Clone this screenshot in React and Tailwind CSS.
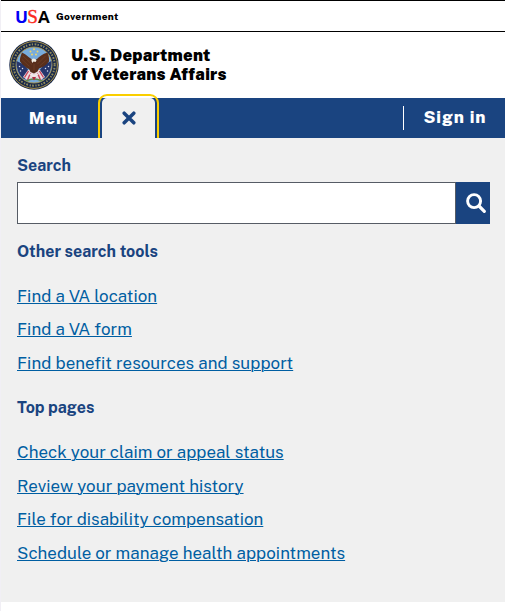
const toolLinks = [
  'Find a VA location',
  'Find a VA form',
  'Find benefit resources and support',
];

const pageLinks = [
  'Check your claim or appeal status',
  'Review your payment history',
  'File for disability compensation',
  'Schedule or manage health appointments',
];

function Seal() {
  return (
    <svg viewBox="0 0 100 100" className="size-[50px] shrink-0" aria-label="Department seal">
      <circle cx="50" cy="50" r="49.5" fill="#17284a" />
      <circle cx="50" cy="50" r="46.8" fill="none" stroke="#ad9449" strokeWidth="2" />
      <circle cx="50" cy="50" r="41.3" fill="none" stroke="#8f8a5c" strokeWidth="4" strokeDasharray="2.6 3.2 3.6 2.4" />
      <circle cx="50" cy="50" r="36" fill="#78acdc" stroke="#ad9449" strokeWidth="1.8" />
      <path d="M15 42 L30 49 L40 62 L37 80 L28 77 Q14 64 15 42Z" fill="#26366c" />
      <path d="M85 42 L70 49 L60 62 L63 80 L72 77 Q86 64 85 42Z" fill="#26366c" />
      <g fill="#dfe2ee">
        <circle cx="21" cy="53" r="1.5" /><circle cx="27" cy="57" r="1.5" /><circle cx="23" cy="62" r="1.5" />
        <circle cx="79" cy="53" r="1.5" /><circle cx="73" cy="57" r="1.5" /><circle cx="77" cy="62" r="1.5" />
      </g>
      <path d="M38 60 L62 60 L72 74 L64 80 L50 76 L36 80 L28 74Z" fill="#ecdde2" />
      <path d="M39 62 L31 75 M43 66 L37 80 M57 66 L63 80 M61 62 L69 75" stroke="#c8435a" strokeWidth="2.8" fill="none" />
      <path d="M50 41 C43 39 36 29 26 25 C23 32 21 38 22 43 C25 47 28 50 31 52 C34 55 36 57 40 58 L43 64 L50 67 L57 63 L60 57 C66 55 74 51 80 43 C81 37 79 30 77 25 C67 28 60 33 56 38Z" fill="#592f1c" />
      <path d="M28 32 L46 49 M26 39 L41 53 M73 32 L57 48 M75 40 L61 52 M50 48 L50 61" stroke="#6f4026" strokeWidth="1.6" fill="none" />
      <path d="M45 42 Q44 38 48 37 Q54 37 55 41 L53 44 L49 43 L47 46Z" fill="#f1eee2" />
      <path d="M40 67 L50 72 L60 67" stroke="#f2edea" strokeWidth="2.6" fill="none" />
      <path d="M34 82 Q50 74 66 82" stroke="#648a52" strokeWidth="3" fill="none" />
      <path d="M46 74 L54 74 L50 81Z" fill="#b62b40" />
      <g fill="#ecd56a">
        <circle cx="50" cy="18.5" r="2" /><circle cx="43" cy="23" r="2" /><circle cx="57" cy="23" r="2" />
        <circle cx="46" cy="29" r="2" /><circle cx="54" cy="29" r="2" />
      </g>
    </svg>
  );
}

function LinkList({ links, gap }) {
  return (
    <ul className={`flex flex-col ${gap}`}>
      {links.map((label) => (
        <li key={label} className="h-6 text-[16.96px] leading-6">
          <a href="#" className="whitespace-nowrap tracking-[0.03px] text-[#005ea2] underline decoration-1 underline-offset-[1px]">{label}</a>
        </li>
      ))}
    </ul>
  );
}

export default function App() {
  return (
    <div className="flex h-[611px] w-[505px] flex-col overflow-hidden border-l border-[#f1eff5] bg-white font-['Public_Sans','Inter','Liberation_Sans',sans-serif]">
      <div className="flex h-8 shrink-0 items-center gap-[5px] border-y border-black pl-[14px] text-black">
        <span className="w-9 whitespace-nowrap text-[17.5px] font-bold leading-none tracking-[-0.4px]">
          <span className="text-[#0000f5]">U</span>
          <span className="font-['Liberation_Serif',serif] text-[19px] font-normal leading-none text-[#fb2b20] [-webkit-text-stroke:0.4px_#fb2b20]">S</span>
          <span>A</span>
        </span>
        <span className="text-[10px] font-extrabold leading-none tracking-[0.3px]">Government</span>
      </div>
      <header className="flex h-[66px] shrink-0 items-center gap-[12px] pl-2">
        <Seal />
        <h1 className="text-[16.5px] font-black leading-[19px] tracking-[0.26px] text-black">
          <span className="block">U.S. Department</span>
          <span className="block">of Veterans Affairs</span>
        </h1>
      </header>
      <nav className="flex h-10 shrink-0 items-stretch bg-[#1a4480] text-[17px] font-extrabold text-white">
        <button className="w-[101px] pl-[4px] pt-[2px] tracking-[0.9px]">Menu</button>
        <button aria-label="Close search" className="flex w-[53px] items-center justify-center rounded-t-[5px] bg-[#f0f0f0] outline-2 outline-offset-2 outline-[#face00]">
          <svg viewBox="0 0 14 14" className="size-[14px]">
            <path d="M2.2 2.2 L11.8 11.8 M11.8 2.2 L2.2 11.8" stroke="#1a4480" strokeWidth="3.5" strokeLinecap="round" />
          </svg>
        </button>
        <div className="ml-auto flex items-center">
          <span className="h-6 w-px bg-white" />
          <button className="w-[101px] pl-px tracking-[1px]">Sign in</button>
        </div>
      </nav>
      <main className="relative h-[464px] shrink-0 bg-[#f0f0f0] pl-4 pt-4 text-[#1a4480]">
        <label htmlFor="q" className="block h-6 text-[16px] font-bold leading-6">Search</label>
        <div className="mt-1 flex h-[42px] w-[473px]">
          <input id="q" className="min-w-0 flex-1 border border-[#565c65] bg-white px-2" />
          <button aria-label="Search" className="flex w-[34px] items-center justify-center bg-[#1a4480] pl-[6px]">
            <svg viewBox="0 0 20 20" className="size-5" fill="none" stroke="white">
              <circle cx="8.1" cy="8.1" r="6.5" strokeWidth="2.9" />
              <path d="M13 13 L18.3 18.3" strokeWidth="3.2" strokeLinecap="round" />
            </svg>
          </button>
        </div>
        <h2 className="mb-5 mt-4 h-6 text-[16px] font-bold leading-6">Other search tools</h2>
        <LinkList links={toolLinks} gap="gap-[9.3px]" />
        <h2 className="mb-5 mt-[21.6px] h-6 text-[16px] font-bold leading-6">Top pages</h2>
        <LinkList links={pageLinks} gap="gap-[9.6px]" />
      </main>
    </div>
  );
}
